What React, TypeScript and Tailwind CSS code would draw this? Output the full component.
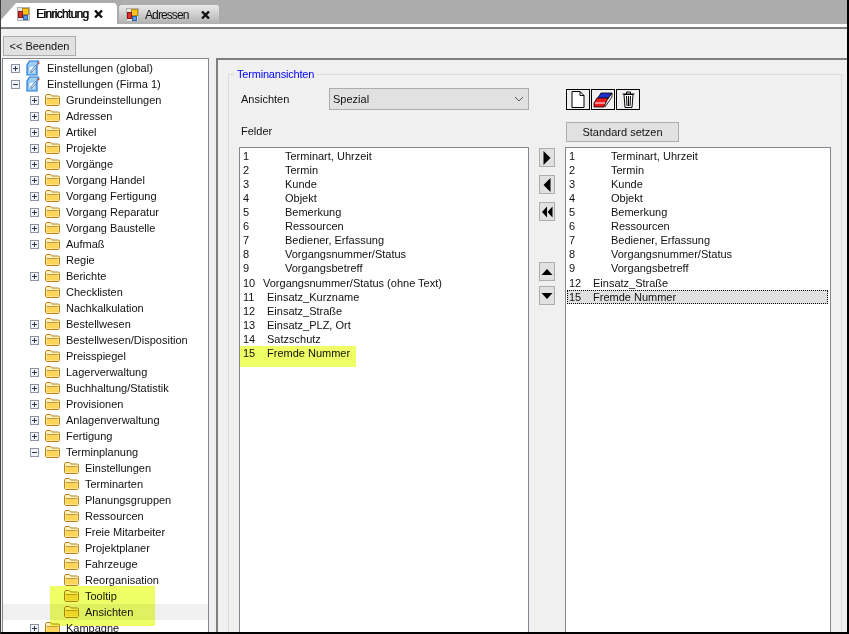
const font = { fontFamily: '"Liberation Sans", Arial, sans-serif' };

type TreeRow = {
  label: string;
  level: 0 | 1 | 2;
  exp?: "plus" | "minus";
  icon?: "gear";
  selected?: boolean;
};

const firstLevel: [string, "plus" | "minus" | undefined][] = [
  ["Grundeinstellungen", "plus"],
  ["Adressen", "plus"],
  ["Artikel", "plus"],
  ["Projekte", "plus"],
  ["Vorgänge", "plus"],
  ["Vorgang Handel", "plus"],
  ["Vorgang Fertigung", "plus"],
  ["Vorgang Reparatur", "plus"],
  ["Vorgang Baustelle", "plus"],
  ["Aufmaß", "plus"],
  ["Regie", undefined],
  ["Berichte", "plus"],
  ["Checklisten", undefined],
  ["Nachkalkulation", undefined],
  ["Bestellwesen", "plus"],
  ["Bestellwesen/Disposition", "plus"],
  ["Preisspiegel", undefined],
  ["Lagerverwaltung", "plus"],
  ["Buchhaltung/Statistik", "plus"],
  ["Provisionen", "plus"],
  ["Anlagenverwaltung", "plus"],
  ["Fertigung", "plus"],
  ["Terminplanung", "minus"],
];

const secondLevel = [
  "Einstellungen",
  "Terminarten",
  "Planungsgruppen",
  "Ressourcen",
  "Freie Mitarbeiter",
  "Projektplaner",
  "Fahrzeuge",
  "Reorganisation",
  "Tooltip",
  "Ansichten",
];

const tree: TreeRow[] = [
  { label: "Einstellungen (global)", level: 0, exp: "plus", icon: "gear" },
  { label: "Einstellungen (Firma 1)", level: 0, exp: "minus", icon: "gear" },
  ...firstLevel.map(([label, exp]): TreeRow => ({ label, level: 1, exp })),
  ...secondLevel.map((label): TreeRow => ({ label, level: 2, selected: label === "Ansichten" })),
  { label: "Kampagne", level: 1, exp: "plus" },
];

const leftFields: [string, string, string][] = [
  ["1", "Terminart, Uhrzeit", "tab"],
  ["2", "Termin", "tab"],
  ["3", "Kunde", "tab"],
  ["4", "Objekt", "tab"],
  ["5", "Bemerkung", "tab"],
  ["6", "Ressourcen", "tab"],
  ["7", "Bediener, Erfassung", "tab"],
  ["8", "Vorgangsnummer/Status", "tab"],
  ["9", "Vorgangsbetreff", "tab"],
  ["10", "Vorgangsnummer/Status (ohne Text)", "long"],
  ["11", "Einsatz_Kurzname", "short"],
  ["12", "Einsatz_Straße", "short"],
  ["13", "Einsatz_PLZ, Ort", "short"],
  ["14", "Satzschutz", "short"],
  ["15", "Fremde Nummer", "short"],
];

const rightFields = [
  ...leftFields.slice(0, 9),
  leftFields[11],
  leftFields[14],
];

function TabIcon() {
  return (
    <svg width="13" height="14" viewBox="0 0 13 14" className="shrink-0">
      <rect x="0.5" y="0.5" width="12" height="13" fill="#e4e4e4" stroke="#b0b0b0" />
      <rect x="5.5" y="1.5" width="6" height="6" fill="#fcc419" stroke="#b98a10" />
      <rect x="1.5" y="4.5" width="4" height="6" fill="#d9302a" stroke="#8a1a16" />
      <rect x="6.5" y="8.5" width="4" height="4" fill="#5b9be0" stroke="#2c62a8" />
    </svg>
  );
}

function CloseIcon() {
  return (
    <svg width="9" height="8" viewBox="0 0 9 8" className="shrink-0">
      <path d="M1 0.5 L8 7.5 M8 0.5 L1 7.5" stroke="#111" strokeWidth="2.4" fill="none" />
    </svg>
  );
}

function Expander({ type }: { type?: "plus" | "minus" }) {
  if (!type) return <span className="w-[9px] h-[9px] shrink-0" />;
  return (
    <svg width="9" height="9" viewBox="0 0 9 9" className="shrink-0">
      <rect x="0.5" y="0.5" width="8" height="8" fill="#f1f3f8" stroke="#8c93a3" />
      <path d="M2 4.5 H7" stroke="#30384f" />
      {type === "plus" && <path d="M4.5 2 V7" stroke="#30384f" />}
    </svg>
  );
}

function FolderIcon() {
  return (
    <svg width="15" height="12" viewBox="0 0 15 12" className="shrink-0">
      <path d="M0.5 2 L1.5 0.5 H5.5 L7 2 H13.5 L14.5 3 V10.5 L13.5 11.5 H1.5 L0.5 10.5 Z" fill="#fdf0c0" stroke="#b9821c" />
      <path d="M1.5 5 H13.5 V10.5 H1.5 Z" fill="#fbd65a" />
      <path d="M1.5 4.5 H13.5" stroke="#c99a35" />
    </svg>
  );
}

function GearDocIcon() {
  return (
    <svg width="15" height="16" viewBox="0 0 15 16" className="shrink-0">
      <path d="M1 5 L3.5 1 H12.5 L11 5 V15 H1 Z" fill="#9fd0f5" stroke="#1f78d8" strokeWidth="1.2" />
      <path d="M3 6 H9 V13 H3 Z" fill="#eaf5fd" stroke="#6fb2ea" strokeWidth="0.7" />
      <path d="M5 11 L9.5 5.5 L10.7 6.5 L6.2 12 L4.7 12.3 Z" fill="#ffffff" stroke="#1c4f96" strokeWidth="0.7" />
      <path d="M11.5 4.5 L13.5 2.5" stroke="#e0502a" strokeWidth="1.2" />
    </svg>
  );
}

function TreeItem({ row }: { row: TreeRow }) {
  return (
    <div className={`h-4 flex items-center shrink-0 ${row.level === 0 ? "pl-2" : "pl-[27px]"} ${row.selected ? "bg-[#f0f0f0]" : ""}`}>
      <Expander type={row.exp} />
      {row.level === 2 && <span className="w-[19px] shrink-0" />}
      <span className="mx-1.5 flex">{row.icon === "gear" ? <GearDocIcon /> : <FolderIcon />}</span>
      <span className="whitespace-nowrap text-[11px] text-[#111]">{row.label}</span>
    </div>
  );
}

function FieldList({ rows, selectLast, width }: { rows: [string, string, string][]; selectLast?: boolean; width: string }) {
  return (
    <div className={`${width} h-[490px] shrink-0 bg-white border border-[#828790] pt-px pl-px pr-[2px]`}>
      {rows.map(([num, text, kind], i) => {
        const selected = selectLast && i === rows.length - 1;
        return (
          <div
            key={num}
            className={`h-[14px] flex items-center whitespace-nowrap text-[11px] text-[#111] ${
              kind !== "tab" && rows[i - 1]?.[2] === "tab" ? "mt-px" : ""
            } ${selected ? "bg-[#e0e0e0] outline-1 outline-dotted outline-black -outline-offset-1" : ""}`}
          >
            <span className={`pl-[2px] shrink-0 ${kind === "tab" ? "w-[44px]" : kind === "long" ? "w-[22px]" : "w-[26px]"}`}>{num}</span>
            <span>{text}</span>
          </div>
        );
      })}
    </div>
  );
}

function ArrowButton({ d, className }: { d: string; className?: string }) {
  return (
    <div className={`w-4 h-[19px] flex items-center justify-center bg-[#e1e1e1] border border-[#adadad] ${className ?? ""}`}>
      <svg width="12" height="14" viewBox="0 0 12 14">
        <path d={d} fill="#000" />
      </svg>
    </div>
  );
}

function ToolButton({ children }: { children: React.ReactNode }) {
  return (
    <div className="w-6 h-[21px] flex items-center justify-center border border-black bg-[#f0f0f0]">{children}</div>
  );
}

export default function App() {
  return (
    <div className="relative w-[849px] h-[634px] flex flex-col overflow-hidden bg-[#f0f0f0] border-l border-l-[#404040] border-r-2 border-r-black border-b-2 border-b-black" style={font}>
      <div className="h-6 shrink-0 bg-[#acacac] flex items-end">
        <div className="w-[116px] h-[21px] bg-white [clip-path:polygon(15px_0,114px_0,100%_3px,100%_100%,0_100%,0_17px)] flex items-center pl-4">
          <TabIcon />
          <span className="ml-[6px] text-[12px] text-[#111] tracking-[-0.7px] w-[58px] [text-shadow:0.4px_0_0_#111]">Einrichtung</span>
          <CloseIcon />
        </div>
        <div className="w-[100px] h-[19px] ml-[2px] bg-gradient-to-b from-[#ebebeb] to-[#b0b0b0] rounded-t-[3px] flex items-center pl-[7px]">
          <TabIcon />
          <span className="ml-[6px] text-[12px] text-[#111] tracking-[-0.9px] w-[56px]">Adressen</span>
          <CloseIcon />
        </div>
      </div>
      <div className="h-[3px] shrink-0 bg-white" />
      <div className="h-[2px] shrink-0 bg-[#7f7f7f]" />

      <div className="h-[29px] shrink-0 flex items-center pl-[2px] pt-[5px]">
        <div className="w-[73px] h-5 flex items-center justify-center bg-[#e1e1e1] border border-[#adadad] text-[11px] text-[#111]">
          &lt;&lt; Beenden
        </div>
      </div>

      <div className="flex-1 min-h-0 flex">
        <div className="w-[207px] ml-px shrink-0 bg-white border border-[#828790] border-b-0 flex flex-col overflow-hidden pt-px">
          {tree.map((row) => (
            <TreeItem key={row.label + row.level} row={row} />
          ))}
        </div>

        <div className="flex-1 min-w-0 ml-[7px] border-t-2 border-l-2 border-[#7f7f7f] pt-2 pl-[10px] pr-[5px]">
          <fieldset className="h-[600px] border border-[#dcdcdc] pl-[10px] min-w-0">
            <legend className="-ml-[5px] px-[3px] text-[11px] leading-[13px] tracking-[-0.2px] text-[#0000ff]">Terminansichten</legend>
            <div className="flex pt-[7px]">
              <div className="w-[290px] shrink-0">
                <div className="flex items-center h-[22px]">
                  <span className="w-[90px] pl-[2px] text-[11px] text-[#111]">Ansichten</span>
                  <div className="w-[200px] h-[22px] flex items-center justify-between bg-[#e1e1e1] border border-[#adadad] pl-[3px] pr-[4px] text-[11px] text-[#111]">
                    Spezial
                    <svg width="10" height="6" viewBox="0 0 10 6">
                      <path d="M1 1 L5 5 L9 1" stroke="#555" fill="none" />
                    </svg>
                  </div>
                </div>
                <div className="h-[37px] flex items-center pl-[2px] pt-[5px] text-[11px] text-[#111]">Felder</div>
                <FieldList rows={leftFields} width="w-[290px]" />
              </div>

              <div className="w-9 shrink-0 pt-[60px] pl-[10px] flex flex-col">
                <ArrowButton d="M2.5 0 L9.5 7 L2.5 14 Z" />
                <ArrowButton d="M9.5 0 L2.5 7 L9.5 14 Z" className="mt-2" />
                <ArrowButton d="M6 1.5 L1 7 L6 12.5 Z M11.5 1.5 L6.5 7 L11.5 12.5 Z" className="mt-2" />
                <ArrowButton d="M6 4 L0.5 10 H11.5 Z" className="mt-[41px]" />
                <ArrowButton d="M0.5 4 H11.5 L6 10 Z" className="mt-[5px]" />
              </div>

              <div className="w-[266px] shrink-0">
                <div className="flex gap-px h-[22px] ml-px pt-px">
                  <ToolButton>
                    <svg width="14" height="17" viewBox="0 0 14 17">
                      <path d="M1 0.5 H9 L13 4.5 V16.5 H1 Z" fill="#fff" stroke="#000" />
                      <path d="M9 0.5 V4.5 H13" fill="none" stroke="#000" />
                    </svg>
                  </ToolButton>
                  <ToolButton>
                    <svg width="20" height="16" viewBox="0 0 20 16">
                      <path d="M8 1 H19 L14 7 H4 Z" fill="#1f2fd0" stroke="#000" strokeWidth="0.8" />
                      <path d="M4 6 H15 L11 15 H1 V11 Z" fill="#f01818" stroke="#000" strokeWidth="0.8" />
                      <path d="M2 11 H12" stroke="#fff" />
                      <path d="M15 7 L19 1 V5 L12 15" fill="none" stroke="#000" strokeWidth="0.8" />
                    </svg>
                  </ToolButton>
                  <ToolButton>
                    <svg width="13" height="17" viewBox="0 0 13 17">
                      <path d="M0.5 3 H12.5 M4.5 3 V1 H8.5 V3" fill="none" stroke="#000" />
                      <path d="M2 3.5 L3 16.5 H10 L11 3.5 Z" fill="#fff" stroke="#000" />
                      <path d="M4.5 5 L5 15 M6.5 5 V15 M8.5 5 L8 15" stroke="#000" />
                    </svg>
                  </ToolButton>
                </div>
                <div className="w-[113px] h-5 ml-px mt-3 flex items-center justify-center bg-[#e1e1e1] border border-[#adadad] text-[11px] text-[#111]">
                  Standard setzen
                </div>
                <div className="mt-[5px]">
                  <FieldList rows={rightFields} selectLast width="w-[266px]" />
                </div>
              </div>
            </div>
          </fieldset>
        </div>
      </div>

      {/* gelbe Markierungen liegen über dem Inhalt */}
      <div className="absolute left-[49px] top-[586px] w-[105px] h-10 bg-[#efff66] mix-blend-multiply" />
      <div className="absolute left-[239px] top-[346px] w-[116px] h-[21px] bg-[#efff66] mix-blend-multiply" />
    </div>
  );
}
